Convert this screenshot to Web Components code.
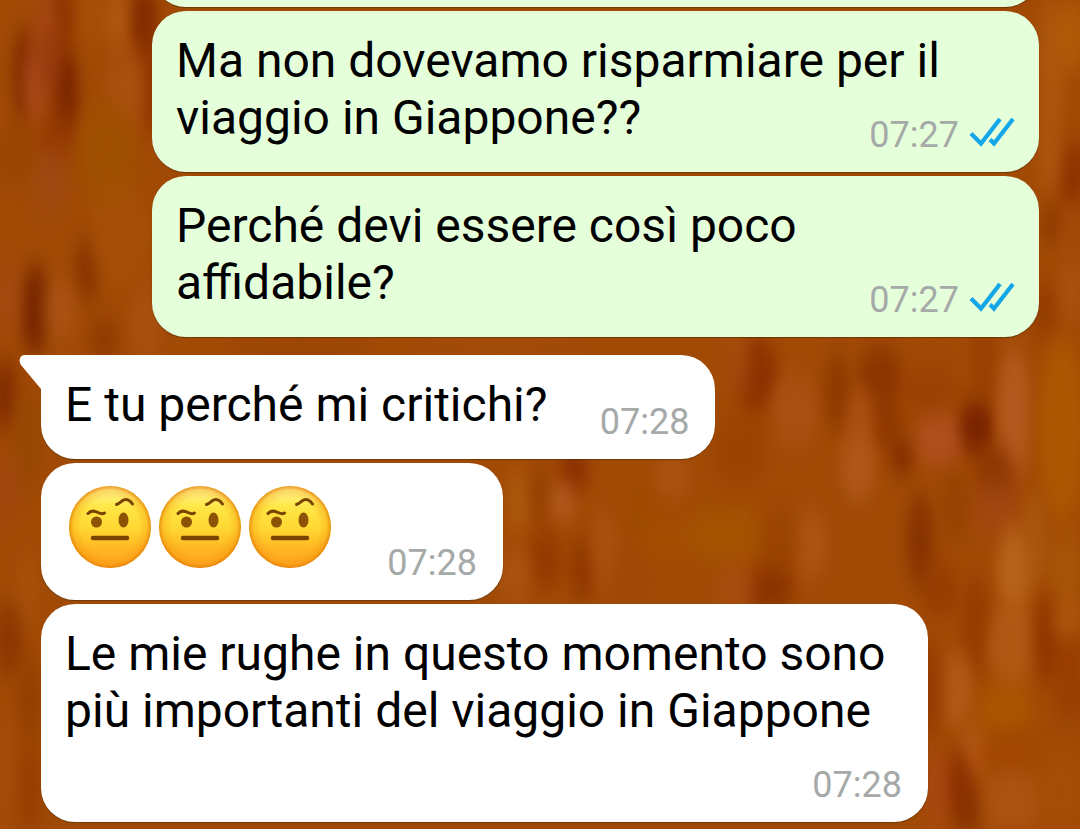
<!DOCTYPE html>
<html lang="it">
<head>
<meta charset="utf-8">
<meta name="viewport" content="width=device-width, initial-scale=1">
<title>Chat</title>
<style>
  html, body { height: 100%; }
  body { margin: 0; overflow: hidden; background: #a04a08; font-family: Roboto, "Liberation Sans", sans-serif; }
</style>
</head>
<body>
<chat-screen>
  <chat-group side="out">
    <chat-bubble side="out" blank></chat-bubble>
    <chat-bubble side="out" time="07:27">Ma non dovevamo risparmiare per il viaggio in Giappone??</chat-bubble>
    <chat-bubble side="out" time="07:27">Perché devi essere così poco affidabile?</chat-bubble>
  </chat-group>
  <chat-group side="in">
    <chat-bubble side="in" time="07:28" tail reserve="side">E tu perché mi critichi?</chat-bubble>
    <chat-bubble side="in" time="07:28" reserve="side"><emoji-brow></emoji-brow><emoji-brow></emoji-brow><emoji-brow></emoji-brow></chat-bubble>
    <chat-bubble side="in" time="07:28" reserve="line">Le mie rughe in questo momento sono più importanti del viaggio in Giappone</chat-bubble>
  </chat-group>
</chat-screen>

<script>
class WoodWallpaper extends HTMLElement {
  constructor() {
    super();
    // each patch: centre x, centre y, radius x, radius y, colour, opacity
    const patches = [
      [25,75,9,45,'#7c2600',.8],[66,90,9,40,'#792300',.9],[36,85,8,38,'#b55223',.75],[60,15,9,35,'#882b00',.75],
      [45,20,9,30,'#a64714',.8],[48,65,10,30,'#943510',.6],[100,15,16,28,'#a84f09',.8],[120,20,9,30,'#b05a13',.8],
      [144,18,9,35,'#812800',.9],[150,80,8,50,'#8a2f00',.7],[125,90,15,35,'#ac5213',.8],[108,155,25,50,'#a05000',.9],
      [15,155,16,30,'#974300',.7],[55,135,14,30,'#8f3501',.6],[50,180,14,30,'#a04819',.6],[35,310,12,42,'#782600',.95],
      [87,270,9,30,'#863000',.8],[60,310,12,30,'#ac5416',.8],[8,300,8,35,'#a74913',.8],[120,235,25,50,'#a95209',.6],
      [104,340,12,22,'#8c3500',.7],[145,325,10,35,'#ad5212',.8],[5,395,9,35,'#802b00',.9],[28,440,12,50,'#964603',.8],
      [5,490,12,30,'#a04511',.7],[27,590,8,40,'#a9520d',.7],[8,640,12,35,'#8a3300',.8],[30,700,8,40,'#8f3900',.7],[7,770,8,50,'#a94c0c',.7],[30,790,9,45,'#933b00',.7],
      [300,347,70,7,'#954000',.7],[500,347,80,7,'#a54e0d',.8],
      [1052,60,9,60,'#b05a10',.8],[1072,35,12,35,'#b25d08',.8],[1072,175,12,30,'#8b3100',.9],[1050,150,9,45,'#b05811',.7],
      [1052,225,9,15,'#8b3600',.8],[1072,240,9,35,'#a54a0c',.7],[1044,310,8,25,'#8f3600',.7],[1072,290,9,30,'#ad5315',.7],
      [756,375,18,36,'#8a3000',.9],[738,360,8,35,'#aa4e10',.7],[795,410,20,35,'#ad5116',.8],[838,392,10,38,'#8c3600',.8],
      [880,375,18,28,'#8a3300',.9],[860,440,11,50,'#ad5216',.8],[888,420,10,30,'#8c3400',.8],[930,390,25,28,'#983c03',.6],
      [940,440,22,23,'#b35022',.85],[902,457,7,16,'#7f2800',.9],[977,427,14,26,'#782100',.95],[984,360,9,40,'#953c00',.7],
      [1014,415,12,65,'#b75b22',.9],[996,475,16,28,'#883000',.7],[1062,430,20,90,'#ad5801',.9],[995,510,22,25,'#a34815',.7],
      [920,540,10,45,'#863100',.9],[955,505,12,35,'#8f3c00',.5],[740,450,22,35,'#984000',.7],
      [725,535,40,25,'#a75401',.9],[808,545,15,32,'#b25a18',.7],[780,545,18,35,'#974000',.6],[857,470,13,30,'#b25b1e',.7],
      [770,590,20,20,'#893000',.9],[735,588,15,18,'#ad5018',.6],[520,500,10,30,'#b05b10',.8],[574,470,11,18,'#872c00',.9],
      [541,495,9,25,'#923c00',.7],[562,502,9,15,'#b9602a',.8],[545,560,13,28,'#913700',.8],[515,575,12,25,'#ad5413',.8],
      [583,570,10,30,'#8d3400',.8],[605,550,10,40,'#ac5412',.7],[638,500,14,26,'#a04a00',.8],[672,475,14,24,'#ae5514',.7],
      [630,575,15,25,'#9f4609',.6],[665,540,20,20,'#a55000',.8],
      [1014,570,13,42,'#bc671e',.85],[1035,540,9,45,'#b05d16',.6],[1065,570,12,38,'#ad5a09',.6],[940,590,14,25,'#913700',.7],
      [976,625,11,50,'#923900',.75],[1012,645,20,42,'#b45b18',.8],[1047,640,10,42,'#903400',.85],[1070,655,12,30,'#973a00',.7],
      [1067,620,12,14,'#b56014',.7],[955,690,15,35,'#b55d1a',.8],[932,690,8,45,'#913600',.7],[1005,710,24,24,'#ad5700',.85],
      [973,755,11,28,'#b75b19',.75],[958,785,12,32,'#8c2e00',.85],[968,810,10,24,'#853000',.8],[936,790,9,40,'#a94713',.8],
      [1010,755,26,22,'#a14500',.7],[1070,700,12,20,'#913800',.6],[1012,800,25,28,'#b25718',.7],[1060,790,20,38,'#a94f07',.6]
    ];
    this.attachShadow({ mode: 'open' }).innerHTML = `
      <style>
        :host { display: block; position: absolute; inset: 0; z-index: -1; }
        svg { display: block; width: 100%; height: 100%; }
      </style>
      <svg viewBox="0 0 1080 829" preserveAspectRatio="xMidYMid slice" aria-hidden="true">
        <defs><filter id="soft" x="-150%" y="-150%" width="400%" height="400%" color-interpolation-filters="sRGB"><feGaussianBlur stdDeviation="7 12"/></filter></defs>
        <rect width="1080" height="829" fill="#a14a06"/>
        ${patches.map(([x, y, rx, ry, c, o]) => `<ellipse cx="${x}" cy="${y}" rx="${rx + 4}" ry="${ry + 2}" fill="${c}" opacity="${o}" filter="url(#soft)"/>`).join('')}
      </svg>`;
  }
}

class ChatScreen extends HTMLElement {
  constructor() {
    super();
    this.attachShadow({ mode: 'open' }).innerHTML = `
      <style>
        :host { display: block; position: relative; z-index: 0; min-height: 100%; overflow: hidden; }
        main { display: flex; flex-direction: column; justify-content: flex-end; gap: 18px; padding: 0 41px 7px; height: 100vh; box-sizing: border-box; }
      </style>
      <wood-wallpaper></wood-wallpaper>
      <main><slot></slot></main>`;
  }
}

class ChatGroup extends HTMLElement {
  constructor() {
    super();
    this.attachShadow({ mode: 'open' }).innerHTML = `
      <style>
        :host { display: flex; flex-direction: column; align-items: flex-start; gap: 4px; }
        :host([side="out"]) { align-items: flex-end; }
      </style>
      <slot></slot>`;
  }
}

class ReadTicks extends HTMLElement {
  constructor() {
    super();
    this.attachShadow({ mode: 'open' }).innerHTML = `
      <style>
        :host { display: block; }
        svg { display: block; width: 46px; height: 36px; overflow: visible; }
      </style>
      <svg viewBox="0 0 46 36" role="img" aria-label="Letto" fill="none" stroke="#13a6e8" stroke-width="4.2" stroke-linecap="butt" stroke-linejoin="miter">
        <path d="M4 16.500 14 26.500 33 2M23 22.500 27 26.500 46 2"/>
      </svg>`;
  }
}

class EmojiBrow extends HTMLElement {
  constructor() {
    super();
    this.attachShadow({ mode: 'open' }).innerHTML = `
      <style>
        :host { display: block; }
        svg { display: block; width: 90px; height: 90px; }
      </style>
      <svg viewBox="0 0 90 90" role="img" aria-label="Faccina con sopracciglio alzato">
        <defs>
          <linearGradient id="skin" x1="0" y1="0" x2="0" y2="1">
            <stop offset="0" stop-color="#fff7a0"/><stop offset=".25" stop-color="#ffe747"/>
            <stop offset=".5" stop-color="#ffd933"/><stop offset=".75" stop-color="#ffb823"/><stop offset="1" stop-color="#ffa521"/>
          </linearGradient>
          <radialGradient id="edge" cx=".5" cy=".5" r=".5">
            <stop offset=".7" stop-color="#f08c08" stop-opacity="0"/><stop offset=".9" stop-color="#f08c08" stop-opacity=".3"/><stop offset="1" stop-color="#e27c04" stop-opacity=".8"/>
          </radialGradient>
        </defs>
        <circle cx="45" cy="43" r="41" fill="url(#skin)"/>
        <circle cx="45" cy="43" r="41" fill="url(#edge)"/>
        <ellipse cx="31.500" cy="38" rx="5.500" ry="5.500" fill="#8d5304"/>
        <ellipse cx="58.500" cy="36" rx="5" ry="7.500" fill="#8d5304"/>
        <g fill="none" stroke="#794300" stroke-linecap="round">
          <path d="M23 29.500C26 26 29 26.500 33 28.500C36 30 38 30 39.500 29" stroke-width="3"/>
          <path d="M51.500 20.500C54 19.500 55 18.500 57 17C61 14 65 16 67.500 20" stroke-width="3"/>
          <path d="M28 54H62" stroke-width="4.500"/>
        </g>
      </svg>`;
  }
}

class ChatBubble extends HTMLElement {
  constructor() {
    super();
    const out = this.getAttribute('side') === 'out';
    const blank = this.hasAttribute('blank');
    this.attachShadow({ mode: 'open' }).innerHTML = `
      <style>
        :host { display: grid; position: relative; box-sizing: border-box; width: fit-content; max-width: calc(100% - 111px);
          padding: 21px 26px 16px 24px; border-radius: 34px; background: #fff; box-shadow: 0 1px 1px rgba(60, 40, 0, .5); color: #000; }
        :host([side="out"]) { background: #e6ffdb; }
        :host([tail]) { border-top-left-radius: 0; }
        :host([blank]) { width: 100%; min-height: 104px; }
        .text { grid-area: 1 / 1; display: flow-root; margin: 0; padding-bottom: 10px; font-size: 48px; line-height: 57px; }
        .text:has(slot.row) { display: flex; }
        :host([reserve="side"]) .text { padding-right: 142px; }
        :host([reserve="line"]) .text { padding-bottom: 67px; }
        .meta { grid-area: 1 / 1; place-self: end; display: flex; align-items: center; gap: 8px; font-size: 36px; line-height: 42px; color: #a5aaa9; }
        .tail { position: absolute; right: 100%; top: 0; width: 21px; height: 34px; overflow: visible; }
      </style>
      ${this.hasAttribute('tail') ? '<svg class="tail" viewBox="0 0 21 34" aria-hidden="true"><path d="M22 0H5C0 0-2 5 1 10L21 34H22Z" fill="#fff"/></svg>' : ''}
      ${blank ? '' : `<div class="text"><slot class="${this.querySelector('emoji-brow') ? 'row' : ''}"></slot></div>
      <div class="meta"><time>${this.getAttribute('time')}</time>${out ? '<read-ticks></read-ticks>' : ''}</div>`}`;
  }
}

customElements.define('wood-wallpaper', WoodWallpaper);
customElements.define('read-ticks', ReadTicks);
customElements.define('emoji-brow', EmojiBrow);
customElements.define('chat-bubble', ChatBubble);
customElements.define('chat-group', ChatGroup);
customElements.define('chat-screen', ChatScreen);
</script>
</body>
</html>
